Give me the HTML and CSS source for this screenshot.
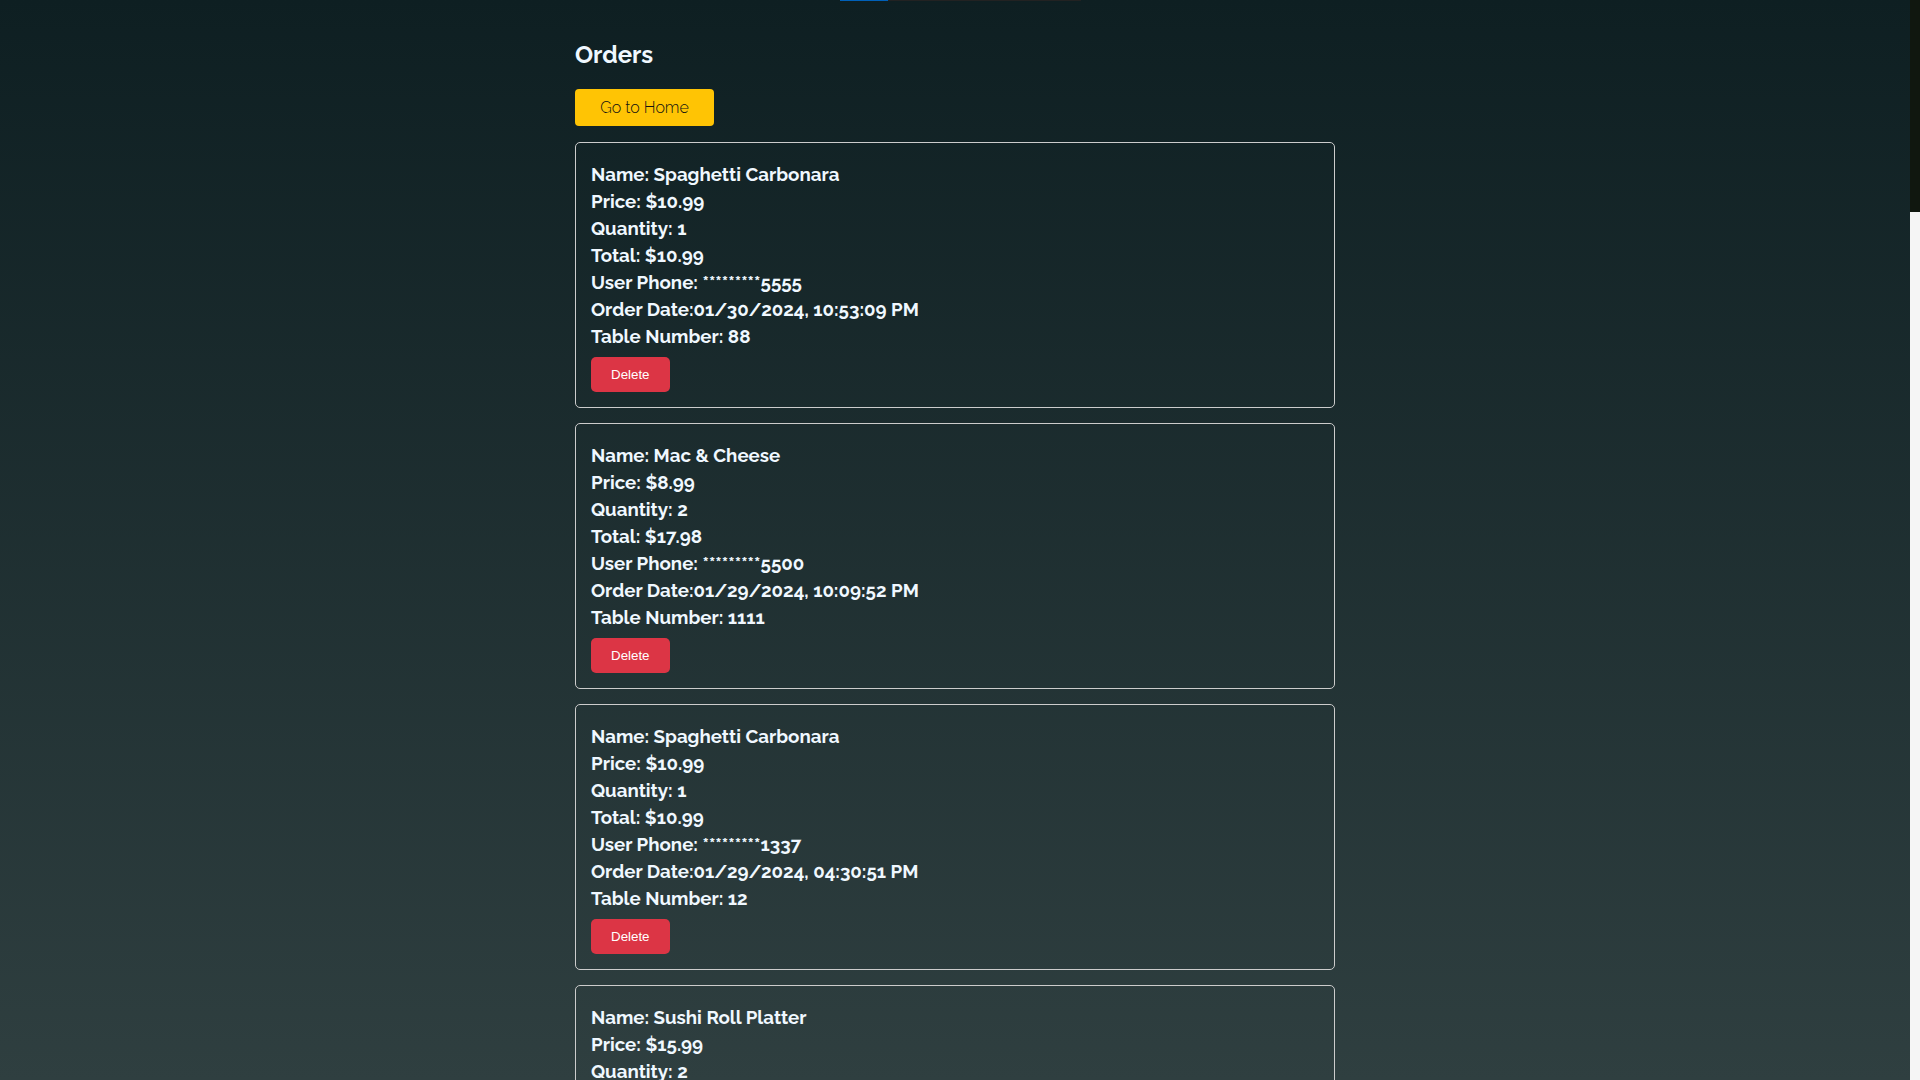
FILE: index.html
```html
<!DOCTYPE html>
<html lang="en">
<head>
<meta charset="utf-8">
<meta name="viewport" content="width=device-width, initial-scale=1">
<title>Orders</title>
<link rel="stylesheet" href="styles.css">
</head>
<body>
<div class="page">
  <main class="orders">
    <h2 class="orders-title">Orders</h2>
    <button class="home-button" type="button">Go to Home</button>
    <ul class="order-list">
      <li class="order">
        <h3>Name: Spaghetti Carbonara</h3>
        <h3>Price: $10.99</h3>
        <h3>Quantity: 1</h3>
        <h3>Total: $10.99</h3>
        <h3>User Phone: *********5555</h3>
        <h3>Order Date:01/30/2024, 10:53:09 PM</h3>
        <h3>Table Number: 88</h3>
        <button class="delete-button" type="button">Delete</button>
      </li>
      <li class="order">
        <h3>Name: Mac &amp; Cheese</h3>
        <h3>Price: $8.99</h3>
        <h3>Quantity: 2</h3>
        <h3>Total: $17.98</h3>
        <h3>User Phone: *********5500</h3>
        <h3>Order Date:01/29/2024, 10:09:52 PM</h3>
        <h3>Table Number: 1111</h3>
        <button class="delete-button" type="button">Delete</button>
      </li>
      <li class="order">
        <h3>Name: Spaghetti Carbonara</h3>
        <h3>Price: $10.99</h3>
        <h3>Quantity: 1</h3>
        <h3>Total: $10.99</h3>
        <h3>User Phone: *********1337</h3>
        <h3>Order Date:01/29/2024, 04:30:51 PM</h3>
        <h3>Table Number: 12</h3>
        <button class="delete-button" type="button">Delete</button>
      </li>
      <li class="order">
        <h3>Name: Sushi Roll Platter</h3>
        <h3>Price: $15.99</h3>
        <h3>Quantity: 2</h3>
      </li>
    </ul>
  </main>
</div>
<div class="scroll-track"><div class="scroll-thumb"></div></div>
<div class="progress"><div class="progress-value"></div></div>
</body>
</html>
```
FILE: styles.css
```css
* {
  box-sizing: border-box;
  margin: 0;
  padding: 0;
}

body {
  display: grid;
  grid-template-columns: 1fr 10px;
  height: 100vh;
  overflow: hidden;
  background: linear-gradient(#0e1f22, #2f3f40);
  color: #f0f8ff;
  font-family: Raleway, Lato, sans-serif;
}

.page {
  height: 100vh;
  overflow: hidden;
}

.orders {
  display: flex;
  flex-direction: column;
  align-items: flex-start;
  max-width: 800px;
  margin: 0 auto;
  padding: 40px 20px;
}

.orders-title {
  margin-bottom: 20px;
  font-size: 24px;
  line-height: 29px;
}

.home-button {
  width: 139px;
  height: 37px;
  margin-bottom: 16px;
  border: 0;
  border-radius: 4px;
  background: #ffc404;
  color: #111;
  font-family: Raleway, Lato, sans-serif;
  font-size: 16px;
  font-weight: 300;
}

.order-list {
  display: grid;
  gap: 15px;
  width: 100%;
  list-style: none;
}

.order {
  padding: 18px 15px 15px;
  border: 1px solid #ccc;
  border-radius: 5px;
}

.order h3 {
  line-height: 27px;
}

.delete-button {
  display: block;
  margin-top: 7px;
  padding: 10px 20px;
  border: 0;
  border-radius: 5px;
  background: #dc3545;
  color: #fff;
  font-family: "Liberation Sans", Arial, sans-serif;
  line-height: 15px;
}

.scroll-track {
  background: #f5f5f5;
}

.scroll-thumb {
  height: 212px;
  background: #10170f;
}

.progress {
  position: absolute;
  top: 0;
  left: 840px;
  width: 241px;
  height: 1px;
  background: #222;
}

.progress-value {
  width: 20%;
  height: 1px;
  background: #0060b8;
}
```
